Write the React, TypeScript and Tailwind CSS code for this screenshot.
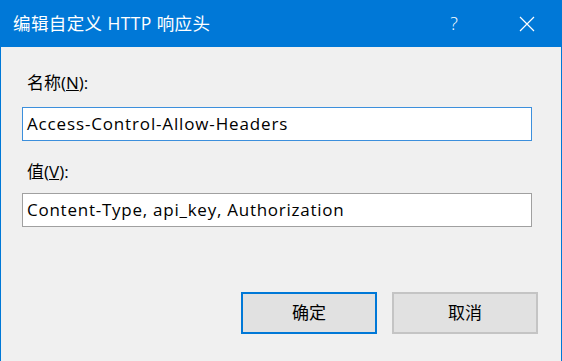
export default function App() {
  const font = { fontFamily: '"Open Sans", "Noto Sans CJK SC", sans-serif' };
  return (
    <div
      className="w-[562px] h-[361px] bg-[#f0f0f0] border-x border-[#0078d7] flex flex-col overflow-hidden text-black"
      style={font}
    >
      {/* Title bar */}
      <div className="h-[47px] bg-[#0078d7] flex items-center text-white shrink-0">
        <span className="pl-[12px] text-[17.5px] tracking-[0.4px] flex-1">编辑自定义 HTTP 响应头</span>
        <span className="w-[16px] text-[18px] font-light text-center mr-[57px]">?</span>
        <svg width="16" height="16" viewBox="0 0 16 16" className="mr-[26px]">
          <path d="M1 1 L15 15 M15 1 L1 15" stroke="white" strokeWidth="1.2" />
        </svg>
      </div>

      {/* Body */}
      <div className="flex flex-col pl-[21px] pr-[28px] pt-[25px]">
        <label className="text-[17px] leading-[22px] pl-[5px]">
          名称(<span className="underline">N</span>):
        </label>
        <div className="mt-[13px] h-[34px] w-[510px] bg-white border border-[#3c8fdc] flex items-center pl-[4px] text-[17px] tracking-[0.85px]">
          Access-Control-Allow-Headers
        </div>

        <label className="text-[17px] leading-[22px] pl-[5px] mt-[20px]">
          值(<span className="underline">V</span>):
        </label>
        <div className="mt-[10px] h-[34px] w-[510px] bg-white border border-[#a0a0a0] flex items-center pl-[4px] text-[17px] tracking-[0.75px]">
          Content-Type, api_key, Authorization
        </div>

        <div className="flex justify-end gap-[15px] mt-[65px] mr-[-5px]">
          <button className="w-[136px] h-[42px] bg-[#e1e1e1] border-2 border-[#0078d7] text-[17px]">确定</button>
          <button className="w-[146px] h-[42px] bg-[#e1e1e1] border-2 border-[#c4c4c4] text-[17px]">取消</button>
        </div>
      </div>
    </div>
  );
}
